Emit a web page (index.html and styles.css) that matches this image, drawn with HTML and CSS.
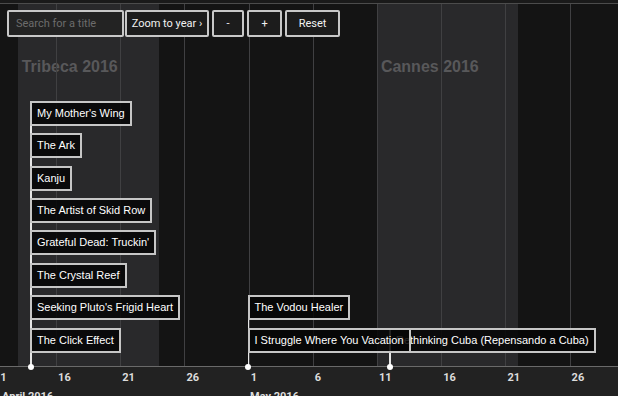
FILE: index.html
```html
<!DOCTYPE html>
<html>
<head>
<meta charset="utf-8">
<link rel="stylesheet" href="styles.css">
</head>
<body>
<div class="timeline">
  <div class="topbar"></div>
  <div class="plot">
    <div class="band" style="left:17.7px;width:141.3px"><span class="band-title">Tribeca 2016</span></div>
    <div class="band" style="left:376.9px;width:141.3px"><span class="band-title">Cannes 2016</span></div>
    <div class="grid">
      <span></span><span></span><span></span><span></span><span></span><span></span><span></span><span></span><span></span>
    </div>
    <div class="group" style="left:389px">
      <div class="film">Rethinking Cuba (Repensando a Cuba)</div>
    </div>
    <div class="group" style="left:30px">
      <div class="film">My Mother's Wing</div>
      <div class="film">The Ark</div>
      <div class="film">Kanju</div>
      <div class="film">The Artist of Skid Row</div>
      <div class="film">Grateful Dead: Truckin'</div>
      <div class="film">The Crystal Reef</div>
      <div class="film">Seeking Pluto's Frigid Heart</div>
      <div class="film">The Click Effect</div>
    </div>
    <div class="group" style="left:247.5px">
      <div class="film">The Vodou Healer</div>
      <div class="film">I Struggle Where You Vacation</div>
    </div>
  </div>
  <div class="axis">
    <div class="ticks">
      <span>11</span><span>16</span><span>21</span><span>26</span><span>1</span><span>6</span><span>11</span><span>16</span><span>21</span><span>26</span>
    </div>
    <div class="months">
      <span class="month month-first">April 2016</span><span class="month">May 2016</span>
    </div>
  </div>
  <div class="controls">
    <input class="search" type="text" placeholder="Search for a title">
    <button class="btn btn-zoom">Zoom to year ›</button>
    <button class="btn btn-minus">-</button>
    <button class="btn btn-plus">+</button>
    <button class="btn btn-reset">Reset</button>
  </div>
</div>
</body>
</html>
```
FILE: styles.css
```css
html, body {
  margin: 0;
  padding: 0;
  background: #141414;
}

.timeline {
  position: relative;
  width: 618px;
  height: 396px;
  overflow: hidden;
  display: flex;
  flex-direction: column;
  font-family: "Liberation Sans", Arial, sans-serif;
}

.topbar {
  height: 3px;
  background: #1a1a1a;
  border-bottom: 1px solid #4c4c4c;
  flex: none;
}

.plot {
  position: relative;
  height: 362px;
  flex: none;
}

.band {
  position: absolute;
  top: 0;
  bottom: 0;
  background: #29292b;
  box-sizing: border-box;
  padding: 54px 0 0 4px;
}

.band-title {
  display: block;
  font-family: "Liberation Sans", Arial, sans-serif;
  font-weight: bold;
  font-size: 16px;
  color: #58585a;
  white-space: nowrap;
}

.grid {
  position: absolute;
  inset: 0;
  display: flex;
  padding-left: 56px;
}

.grid span {
  flex: 0 0 64.2px;
  box-sizing: border-box;
  border-left: 1px solid #404042;
}

.group {
  position: absolute;
  bottom: 0;
  display: flex;
  flex-direction: column;
  align-items: flex-start;
  gap: 7.4px;
  padding-bottom: 13.4px;
}

.group::before {
  content: "";
  position: absolute;
  left: 0;
  top: 0;
  bottom: 0;
  width: 1.5px;
  background: #e6e6e6;
}

.group::after {
  content: "";
  position: absolute;
  left: -2.3px;
  bottom: -3.5px;
  width: 6px;
  height: 6px;
  border-radius: 50%;
  background: #ffffff;
  z-index: 2;
}

.film {
  position: relative;
  height: 25px;
  box-sizing: border-box;
  border: 2px solid #c6c6c6;
  background: rgba(6, 6, 6, 0.86);
  color: #ffffff;
  font-family: "Liberation Sans", Arial, sans-serif;
  font-size: 11px;
  line-height: 21px;
  padding: 0 5px;
  white-space: nowrap;
}

.axis {
  flex: 1;
  border-top: 1px solid #6a6a6a;
  background: #222222;
  color: #dcdcdc;
  font-family: Roboto, "Liberation Sans", sans-serif;
  font-weight: bold;
  font-size: 11px;
}

.ticks {
  display: flex;
  margin-left: -6.1px;
  padding-top: 3.6px;
  white-space: nowrap;
}

.ticks span {
  flex: 0 0 64.2px;
}

.months {
  display: flex;
  margin-top: 6px;
  padding-left: 2px;
  white-space: nowrap;
}

.month-first {
  flex: 0 0 248px;
}

.controls {
  position: absolute;
  top: 10px;
  left: 7px;
  display: flex;
  gap: 3px;
  height: 27px;
}

.search {
  width: 117px;
  height: 27px;
  box-sizing: border-box;
  margin: 0 -2px 0 0;
  border: 2px solid #c8c8c8;
  border-radius: 2px;
  background: #232323;
  color: #eeeeee;
  font-family: Roboto, "Liberation Sans", sans-serif;
  font-size: 11px;
  padding: 0 7px;
  outline: none;
}

.search::placeholder {
  color: #6c6c6c;
}

.btn {
  height: 27px;
  box-sizing: border-box;
  margin: 0;
  padding: 0;
  border: 2px solid #c8c8c8;
  border-radius: 2px;
  background: #1c1c1c;
  color: #f2f2f2;
  font-family: Roboto, "Liberation Sans", sans-serif;
  font-size: 11px;
  text-align: center;
}

.btn-zoom { width: 84px; }
.btn-minus { width: 32px; }
.btn-plus { width: 35px; }
.btn-reset { width: 55px; }
```
